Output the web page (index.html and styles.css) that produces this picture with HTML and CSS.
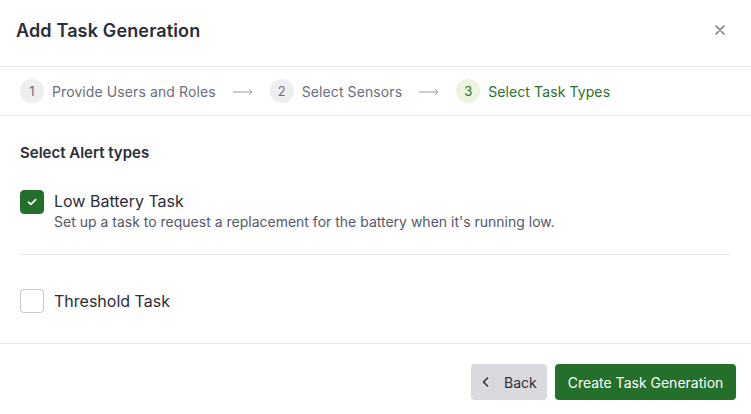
FILE: index.html
```html
<!DOCTYPE html>
<html>
<head>
<meta charset="utf-8">
<link rel="stylesheet" href="styles.css">
</head>
<body>
<div class="modal">
  <header class="header">
    <h1 class="title">Add Task Generation</h1>
    <button class="close" aria-label="Close">
      <svg width="10" height="10" viewBox="0 0 10 10"><path d="M1 1L9 9M9 1L1 9" stroke="#6b6e7b" stroke-width="1.4" stroke-linecap="round"/></svg>
    </button>
  </header>
  <nav class="stepper">
    <div class="step"><span class="num">1</span><span class="label">Provide Users and Roles</span></div>
    <svg class="arrow" width="20" height="8" viewBox="0 0 20 8"><path d="M0 4H19M16 1.2L19 4L16 6.8" stroke="#9a9ca6" stroke-width="1" fill="none"/></svg>
    <div class="step"><span class="num">2</span><span class="label">Select Sensors</span></div>
    <svg class="arrow" width="20" height="8" viewBox="0 0 20 8"><path d="M0 4H19M16 1.2L19 4L16 6.8" stroke="#9a9ca6" stroke-width="1" fill="none"/></svg>
    <div class="step active"><span class="num">3</span><span class="label">Select Task Types</span></div>
  </nav>
  <main class="body">
    <h2 class="section-title">Select Alert types</h2>
    <div class="option first">
      <span class="checkbox checked">
        <svg width="10" height="8" viewBox="0 0 10 8"><path d="M1.4 4.2L3.9 6.4L8.6 1.6" stroke="#fff" stroke-width="1.7" fill="none" stroke-linecap="round" stroke-linejoin="round"/></svg>
      </span>
      <div class="option-text">
        <div class="option-title">Low Battery Task</div>
        <div class="option-desc">Set up a task to request a replacement for the battery when it's running low.</div>
      </div>
    </div>
    <div class="option second">
      <span class="checkbox"></span>
      <div class="option-text">
        <div class="option-title">Threshold Task</div>
      </div>
    </div>
  </main>
  <footer class="footer">
    <button class="btn btn-back">
      <svg width="7" height="10" viewBox="0 0 7 10"><path d="M5.5 1L1.5 5L5.5 9" stroke="#2d2f38" stroke-width="1.6" fill="none" stroke-linecap="round" stroke-linejoin="round"/></svg>
      <span>Back</span>
    </button>
    <button class="btn btn-primary">Create Task Generation</button>
  </footer>
</div>
</body>
</html>
```
FILE: styles.css
```css
* { box-sizing: border-box; }
html, body {
  margin: 0;
  padding: 0;
  background: #fff;
  font-family: Inter, "Noto Sans", sans-serif;
  color: #2b2d36;
}
.modal {
  width: 751px;
  height: 414px;
  display: flex;
  flex-direction: column;
  background: #fff;
}
.header {
  height: 67px;
  border-bottom: 1px solid #e7e7ea;
  display: flex;
  align-items: center;
  justify-content: space-between;
  padding: 0 26px 6px 16px;
}
.title {
  margin: 0;
  font-size: 18px;
  font-weight: 600;
  color: #2b2d36;
  letter-spacing: 0.15px;
}
.close {
  border: 0;
  background: none;
  padding: 6px;
  margin-right: -6px;
  display: flex;
  cursor: pointer;
}
.stepper {
  height: 49px;
  border-bottom: 1px solid #e7e7ea;
  display: flex;
  align-items: center;
  padding: 0 20px;
  gap: 17px;
}
.step {
  display: flex;
  align-items: center;
  gap: 8px;
}
.num {
  width: 24px;
  height: 24px;
  border-radius: 50%;
  background: #eeeef1;
  color: #6b6e7b;
  font-size: 13px;
  display: flex;
  align-items: center;
  justify-content: center;
}
.label {
  font-size: 14px;
  color: #6b6e7b;
  letter-spacing: 0.1px;
}
.step.active .num {
  background: #ebf3dc;
  color: #2a6f2a;
}
.step.active .label {
  color: #2a6f2a;
}
.arrow { margin-top: 1px; }
.body {
  flex: 1;
  padding: 25px 20px 0 20px;
  border-bottom: 1px solid #e7e7ea;
}
.section-title {
  margin: 0 0 25px 0;
  font-size: 15px;
  line-height: 24px;
  font-weight: 600;
  color: #2b2d36;
}
.option {
  display: flex;
  align-items: flex-start;
  gap: 10px;
}
.option.first {
  padding-bottom: 22px;
  border-bottom: 1px solid #e7e7ea;
}
.option.second {
  padding-top: 34px;
}
.checkbox {
  width: 24px;
  height: 24px;
  border-radius: 4px;
  border: 1px solid #c6c7cd;
  background: #fff;
  flex: 0 0 24px;
  display: flex;
  align-items: center;
  justify-content: center;
}
.checkbox.checked {
  background: #24702a;
  border-color: #24702a;
}
.option-title {
  font-size: 16px;
  line-height: 22px;
  color: #2b2d36;
}
.second .option-title {
  line-height: 24px;
}
.option-desc {
  font-size: 14px;
  line-height: 20px;
  color: #555866;
}
.footer {
  height: 70px;
  display: flex;
  align-items: flex-start;
  justify-content: flex-end;
  gap: 8px;
  padding: 20px 15px 0 0;
}
.btn {
  height: 36px;
  border: 0;
  border-radius: 4px;
  font-family: inherit;
  font-size: 14px;
  display: flex;
  align-items: center;
  cursor: pointer;
}
.btn-back {
  width: 76px;
  background: #d9d9de;
  color: #2d2f38;
  padding: 0 10px 0 11px;
  gap: 15px;
}
.btn-primary {
  width: 181px;
  background: #24702a;
  color: #fff;
  justify-content: center;
}
```
